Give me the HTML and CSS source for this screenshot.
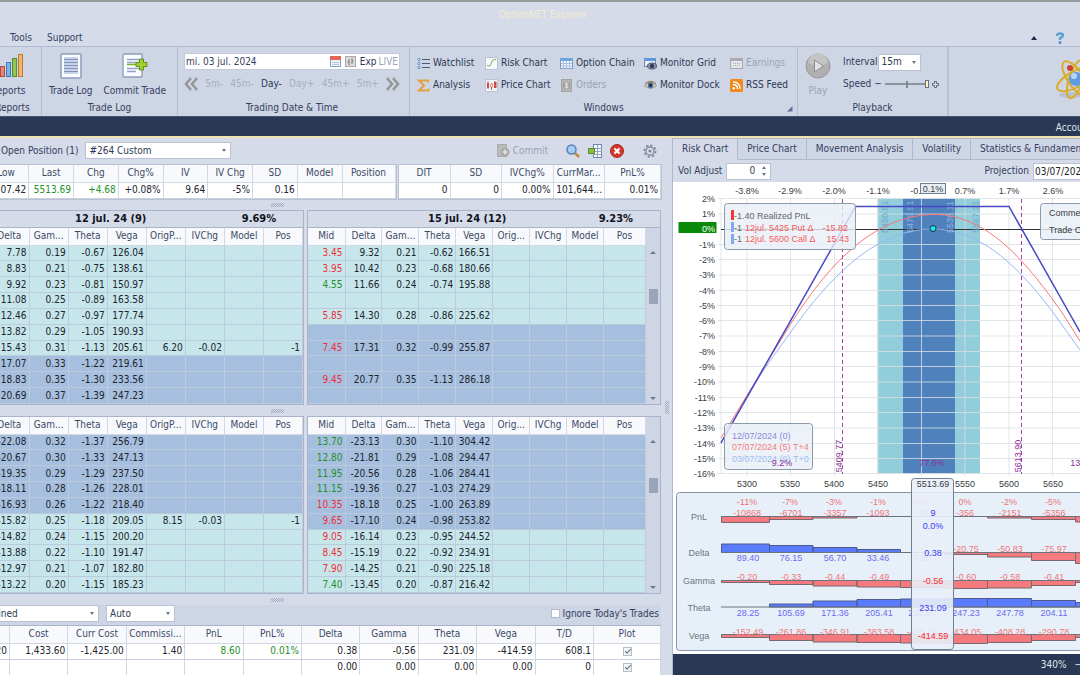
FILE: index.html
```html
<!DOCTYPE html>
<html lang="en">
<head>
<meta charset="utf-8">
<title>OptionNET Explorer</title>
<link rel="stylesheet" href="styles.css">
</head>
<body>
<header class="titlebar">
  <div class="app-title">OptionNET Explorer</div>
  <nav class="menu">
    <button class="menu-item">Tools</button>
    <button class="menu-item">Support</button>
    <span class="menu-spacer"></span>
    <button class="icon-btn" aria-label="Collapse ribbon"><svg width="6" height="4"><path d="M0 4 3 0l3 4z" fill="#1f2a4a"/></svg></button>
    <button class="icon-btn" aria-label="Help"><svg width="10" height="12" viewBox="0 0 10 12"><path d="M2 4q0-2.500 3-2.500t3 2q0 1.500-3 2.500v2" fill="none" stroke="#5d9fd0" stroke-width="2.400"/><circle cx="5" cy="10.500" r="1.500" fill="#4c8fc8"/></svg></button>
  </nav>
</header>

<section class="ribbon">
  <div class="group g-reports">
    <div class="group-body">
      <button class="big"><svg width="32" height="26" viewBox="0 0 32 26"><g stroke-width="1"><rect x="2.500" y="18.500" width="4" height="5" fill="#d9756f" stroke="#a44"/><rect x="8.500" y="13.500" width="4" height="10" fill="#e8837a" stroke="#b44a40"/><rect x="14.500" y="9.500" width="4" height="14" fill="#7db4e6" stroke="#3f7cb5"/><rect x="20.500" y="5.500" width="4" height="18" fill="#93c553" stroke="#5b8c2c"/><rect x="26.500" y="1.500" width="4" height="22" fill="#f2b36a" stroke="#c07b34"/></g></svg><span>Reports</span></button>
    </div>
    <div class="caption">Reports</div>
  </div>
  <div class="group g-log">
    <div class="group-body">
      <button class="big"><svg width="22" height="26" viewBox="0 0 22 26"><rect x="1" y="1" width="20" height="24" rx="1" fill="#fbfcff" stroke="#8d9cba" stroke-width="1.500"/><rect x="4" y="4" width="14" height="17" fill="#c8d3ea"/><path d="M4 6.500h14M4 9.500h14M4 12.500h14M4 15.500h14M4 18.500h14" stroke="#8193bb"/></svg><span>Trade Log</span></button>
      <button class="big"><svg width="26" height="26" viewBox="0 0 26 26"><rect x="1" y="1" width="19" height="23" rx="1" fill="#fbfcff" stroke="#8d9cba" stroke-width="1.300"/><path d="M5 6.500h12M5 9.500h12M5 15.500h12M5 18.500h9" stroke="#93a3c6" stroke-width="1.500"/><path d="M5 11.500h12" stroke="#7cb228" stroke-width="1.500"/><path d="M17.500 6h4v3.500H25v4h-3.500V17h-4v-3.500H14v-4h3.500z" fill="#9ed02f" stroke="#5f8f1e"/></svg><span>Commit Trade</span></button>
    </div>
    <div class="caption">Trade Log</div>
  </div>
  <div class="group g-date">
    <div class="group-body col">
      <div class="datebox">
        <input class="date-input" type="text" value="mi. 03 jul. 2024" aria-label="Trading date">
        <svg width="11" height="11" viewBox="0 0 11 11"><rect x=".5" y=".5" width="10" height="10" fill="#eef3fa" stroke="#8d9fbf"/><path d="M0 0h11v4H0z" fill="#e2665a"/><path d="M2 6.500h7M2 8.500h7" stroke="#b9c5d9"/></svg>
        <svg width="11" height="11" viewBox="0 0 11 11"><rect x=".5" y=".5" width="10" height="10" fill="#dcdcdc" stroke="#aaa"/><path d="M4 3v6M4 6H2.500M7 2v6M7 5h1.500" stroke="#777" fill="none"/></svg>
        <span class="exp">Exp</span><span class="live">LIVE</span>
      </div>
      <div class="steps">
        <button aria-label="Back"><svg width="14" height="14" viewBox="0 0 14 14"><path d="M7 1 2 7l5 6M13 1 8 7l5 6" fill="none" stroke="#969696" stroke-width="2.500"/></svg></button>
        <button class="off">5m-</button><button class="off">45m-</button><button>Day-</button><button class="off">Day+</button><button class="off">45m+</button><button class="off">5m+</button>
        <button aria-label="Forward"><svg width="14" height="14" viewBox="0 0 14 14"><path d="m1 1 5 6-5 6M7 1l5 6-5 6" fill="none" stroke="#969696" stroke-width="2.500"/></svg></button>
      </div>
    </div>
    <div class="caption">Trading Date &amp; Time</div>
  </div>
  <div class="group g-windows">
    <div class="group-body">
      <div class="wingrid">
        <button><svg width="13" height="13" viewBox="0 0 13 13"><path d="M5 2.500h8M5 6.500h8M5 10.500h8" stroke="#4d5a75" stroke-width="1.200"/><g fill="#cfe2f6" stroke="#4f86c0" stroke-width=".8"><circle cx="2" cy="2.500" r="1.200"/><circle cx="2" cy="6.500" r="1.200"/><circle cx="2" cy="10.500" r="1.200"/></g></svg>Watchlist</button>
        <button><svg width="13" height="13" viewBox="0 0 13 13"><rect x=".5" y=".5" width="12" height="12" fill="#f7f9f6" stroke="#b9c4d6"/><path d="M2 8.500q3 2 4-1.500t2-4 3-.5" fill="none" stroke="#8a9f78"/></svg>Risk Chart</button>
        <button><svg width="13" height="13" viewBox="0 0 13 13"><rect x=".5" y="1.500" width="12" height="10" fill="#f4f8fd" stroke="#7a9cc8"/><path d="M0 1h13v3H0z" fill="#6fa3dc"/><path d="M3.500 4v8M6.500 4v8M9.500 4v8M1 6.500h11M1 9h11" stroke="#a8c0df"/></svg>Option Chain</button>
        <button><svg width="13" height="13" viewBox="0 0 13 13"><rect x=".5" y="1.500" width="11" height="8" fill="#e9f0fa" stroke="#7089b3"/><path d="M0 1h12v3H0z" fill="#5f98da"/><ellipse cx="8" cy="9" rx="4.500" ry="3" fill="#8793ab" stroke="#4b5670"/><circle cx="8" cy="9" r="2" fill="#26324a"/></svg>Monitor Grid</button>
        <button class="off"><svg width="13" height="13" viewBox="0 0 13 13"><rect x=".5" y="1.500" width="12" height="10" fill="#e4e6ea" stroke="#a4a8b0"/><path d="M0 1h13v3H0z" fill="#aaa"/><path d="M3 6.500h8M3 8.500h8" stroke="#aaa" stroke-dasharray="1 1"/></svg>Earnings</button>
        <button><svg width="13" height="13" viewBox="0 0 13 13"><path d="M11 3.500V1.500H2L7 6.500 2 11.500h9.500v-2" fill="none" stroke="#e2a13d" stroke-width="2"/></svg>Analysis</button>
        <button><svg width="13" height="13" viewBox="0 0 13 13"><rect x=".5" y=".5" width="12" height="12" fill="#f4f4f6" stroke="#b9c4d6"/><path d="M3 2v8M6.500 4v7M10 2v7" stroke="#777"/><path d="M2 4h2v5H2zM9 3h2.500v6H9z" fill="#d84444"/><path d="M5.500 5h2v3h-2z" fill="#fff" stroke="#c55" stroke-width=".6"/></svg>Price Chart</button>
        <button class="off"><svg width="13" height="13" viewBox="0 0 13 13"><rect x="1.500" y=".5" width="10" height="12" fill="#b5b5b5" stroke="#a5a5a5"/><circle cx="6.500" cy="6.500" r="3.500" fill="#999"/><path d="M8.500 4.500h-3v2h2.500v2H4.500M6.500 3v7" fill="none" stroke="#ddd"/></svg>Orders</button>
        <button><svg width="13" height="13" viewBox="0 0 13 13"><path d="M.5 6.500q6-6.500 12 0-6 5.500-12 0z" fill="#f3ead9" stroke="#95806a"/><circle cx="6.500" cy="6.300" r="3" fill="#57789f"/><circle cx="6.500" cy="6.300" r="1.500" fill="#1c2a3f"/><path d="M1 4.500q5.500-4.500 11 0" fill="none" stroke="#a07c58"/></svg>Monitor Dock</button>
        <button><svg width="13" height="13" viewBox="0 0 13 13"><rect width="13" height="13" rx="1.500" fill="#f08a1c"/><circle cx="3.800" cy="9.300" r="1.200" fill="#fff"/><path d="M3 5.500q4.500 0 4.500 4.500M3 2.800q7 0 7 7.200" fill="none" stroke="#fff" stroke-width="1.300"/></svg>RSS Feed</button>
      </div>
    </div>
    <div class="caption">Windows</div>
    <svg class="launcher" width="6" height="6"><path d="M5.500 0v5.500H0z" fill="#5f6f92"/></svg>
  </div>
  <div class="group g-play">
    <div class="group-body">
      <button class="big off"><svg width="26" height="26" viewBox="0 0 26 26"><circle cx="13" cy="13" r="12" fill="#b0b0b0" stroke="#999"/><path d="M3 10a10 10 0 0 1 20 0q-10 5-20 0z" fill="#c4c4c4"/><path d="M9.500 7v12l9-6z" fill="#e2e2e2" stroke="#8c8c8c"/></svg><span>Play</span></button>
      <div class="playopts">
        <div class="optrow"><label for="interval">Interval</label><span class="combo c-int"><select id="interval"><option>15m</option></select></span></div>
        <div class="optrow"><label for="speed">Speed</label><span class="sgn">−</span><input id="speed" class="speed" type="range" value="100"><svg width="7" height="7"><path d="M2.500.5h2v2h2v2h-2v2h-2v-2h-2v-2h2z" fill="#d8deec" stroke="#5f6b7c"/></svg></div>
      </div>
    </div>
    <div class="caption">Playback</div>
  </div>
  <div class="logo"><svg width="46" height="46" viewBox="0 0 46 46"><ellipse cx="16" cy="38" rx="12" ry="3" fill="#b9c0cf"/><g fill="none" stroke="#d9ad2b" stroke-width="2"><ellipse cx="21" cy="22" rx="21" ry="8" transform="rotate(-28 21 22)"/><ellipse cx="21" cy="22" rx="21" ry="8" transform="rotate(55 21 22)"/><ellipse cx="21" cy="22" rx="20" ry="7" transform="rotate(108 21 22)"/></g><circle cx="21" cy="22" r="7" fill="#5f9be0"/><circle cx="19" cy="19" r="3" fill="#b8d6f6"/><circle cx="15" cy="11" r="3" fill="#c9442c"/></svg></div>
</section>

<div class="accountbar">Account</div>

<main class="workspace">
  <section class="left">
    <div class="posbar">
      <label for="position">Open Position (1)</label>
      <span class="combo c-pos"><select id="position"><option>#264 Custom</option></select></span>
      <span class="menu-spacer"></span>
      <button class="tool off"><svg width="13" height="13" viewBox="0 0 13 13"><rect x=".5" y=".5" width="9" height="12" fill="#bbb" stroke="#aaa"/><circle cx="8" cy="8" r="4.500" fill="#aaa"/><path d="M8 5.500v5M5.500 8h5" stroke="#e6e6e6" stroke-width="1.500"/></svg>Commit</button>
      <button class="tool t1" aria-label="Search"><svg width="14" height="14" viewBox="0 0 14 14"><path d="m9 9 4 4" stroke="#c28a3c" stroke-width="2.500"/><circle cx="5.500" cy="5.500" r="4.500" fill="#a6cdf5" stroke="#5d82b8" stroke-width="1.500"/></svg></button>
      <button class="tool t2" aria-label="Columns"><svg width="14" height="14" viewBox="0 0 14 14"><rect x="5.500" y=".5" width="8" height="13" fill="#f6f9fd" stroke="#7186ad"/><path d="M5 4.500h9M5 7.500h9M5 10.500h9M9.500 1v12" stroke="#92a4c4"/><path d="M.5 4.500h6v5h-6z" fill="#8bbf3a" stroke="#5c8726"/></svg></button>
      <button class="tool t2" aria-label="Close position"><svg width="14" height="14" viewBox="0 0 14 14"><circle cx="7" cy="7" r="6.500" fill="#d6362c" stroke="#a82820"/><path d="m4.500 4.500 5 5M9.500 4.500l-5 5" stroke="#fff" stroke-width="2.200"/></svg></button>
      <button class="tool t3" aria-label="Settings"><svg width="14" height="14" viewBox="0 0 14 14"><circle cx="7" cy="7" r="5.700" fill="none" stroke="#7d8799" stroke-width="1.600" stroke-dasharray="2.400 2"/><circle cx="7" cy="7" r="4" fill="#dde2ec" stroke="#7d8799" stroke-width="1.300"/><circle cx="7" cy="7" r="1.600" fill="#7d8799"/></svg></button>
    </div>

    <div class="quotes">
      <table class="grid q1">
        <thead><tr><th>Low<th>Last<th>Chg<th>Chg%<th>IV<th>IV Chg<th>SD<th>Model<th class="wide">Position</thead>
        <tbody><tr><td>5507.42<td class="g">5513.69<td class="g">+4.68<td>+0.08%<td>9.64<td>-5%<td>0.16<td><td></tbody>
      </table>
      <table class="grid q2">
        <thead><tr><th>DIT<th>SD<th>IVChg%<th>CurrMar...<th class="last">PnL%</thead>
        <tbody><tr><td>0<td>0<td>0.00%<td>101,644...<td>0.01%</tbody>
      </table>
    </div>
    <div class="split"></div>

    <div class="chains calls">
      <div class="chain near">
        <div class="chain-title"><span>12 jul. 24 (9)</span><span class="iv">9.69%</span></div>
        <table class="grid rows">
          <thead><tr><th>Delta<th>Gam...<th>Theta<th>Vega<th>OrigP...<th>IVChg<th>Model<th>Pos</thead>
          <tbody>
          <tr><td>7.78<td>0.19<td>-0.67<td>126.04<td><td><td><td>
          <tr><td>8.83<td>0.21<td>-0.75<td>138.61<td><td><td><td>
          <tr><td>9.92<td>0.23<td>-0.81<td>150.97<td><td><td><td>
          <tr><td>11.08<td>0.25<td>-0.89<td>163.58<td><td><td><td>
          <tr><td>12.46<td>0.27<td>-0.97<td>177.74<td><td><td><td>
          <tr><td>13.82<td>0.29<td>-1.05<td>190.93<td><td><td><td>
          <tr><td>15.43<td>0.31<td>-1.13<td>205.61<td>6.20<td>-0.02<td><td>-1
          <tr class="d"><td>17.07<td>0.33<td>-1.22<td>219.61<td><td><td><td>
          <tr class="d"><td>18.83<td>0.35<td>-1.30<td>233.56<td><td><td><td>
          <tr class="d"><td>20.69<td>0.37<td>-1.39<td>247.23<td><td><td><td>
          </tbody>
        </table>
      </div>
      <div class="chain far">
        <div class="chain-title"><span>15 jul. 24 (12)</span><span class="iv">9.23%</span></div>
        <div class="scrolled">
        <table class="grid rows">
          <thead><tr><th>Mid<th>Delta<th>Gam...<th>Theta<th>Vega<th>Orig...<th>IVChg<th>Model<th class="pos">Pos</thead>
          <tbody>
          <tr><td class="r">3.45<td>9.32<td>0.21<td>-0.62<td>166.51<td><td><td><td>
          <tr><td class="r">3.95<td>10.42<td>0.23<td>-0.68<td>180.66<td><td><td><td>
          <tr><td class="g">4.55<td>11.66<td>0.24<td>-0.74<td>195.88<td><td><td><td>
          <tr><td><td><td><td><td><td><td><td><td>
          <tr><td class="r">5.85<td>14.30<td>0.28<td>-0.86<td>225.62<td><td><td><td>
          <tr class="d"><td><td><td><td><td><td><td><td><td>
          <tr class="d"><td class="r">7.45<td>17.31<td>0.32<td>-0.99<td>255.87<td><td><td><td>
          <tr class="d"><td><td><td><td><td><td><td><td><td>
          <tr class="d"><td class="r">9.45<td>20.77<td>0.35<td>-1.13<td>286.18<td><td><td><td>
          <tr class="d"><td><td><td><td><td><td><td><td><td>
          </tbody>
        </table>
        <div class="sbar"><i class="up"></i><b></b><i class="down"></i></div>
        </div>
      </div>
    </div>
    <div class="split"></div>

    <div class="chains puts">
      <div class="chain near">
        <table class="grid rows">
          <thead><tr><th>Delta<th>Gam...<th>Theta<th>Vega<th>OrigP...<th>IVChg<th>Model<th>Pos</thead>
          <tbody>
          <tr class="d"><td>-22.08<td>0.32<td>-1.37<td>256.79<td><td><td><td>
          <tr class="d"><td>-20.67<td>0.30<td>-1.33<td>247.13<td><td><td><td>
          <tr class="d"><td>-19.35<td>0.29<td>-1.29<td>237.50<td><td><td><td>
          <tr class="d"><td>-18.11<td>0.28<td>-1.26<td>228.01<td><td><td><td>
          <tr class="d"><td>-16.93<td>0.26<td>-1.22<td>218.40<td><td><td><td>
          <tr><td>-15.82<td>0.25<td>-1.18<td>209.05<td>8.15<td>-0.03<td><td>-1
          <tr><td>-14.82<td>0.24<td>-1.15<td>200.20<td><td><td><td>
          <tr><td>-13.88<td>0.22<td>-1.10<td>191.47<td><td><td><td>
          <tr><td>-12.97<td>0.21<td>-1.07<td>182.80<td><td><td><td>
          <tr><td>-13.22<td>0.20<td>-1.15<td>185.23<td><td><td><td>
          </tbody>
        </table>
      </div>
      <div class="chain far">
        <div class="scrolled">
        <table class="grid rows">
          <thead><tr><th>Mid<th>Delta<th>Gam...<th>Theta<th>Vega<th>Orig...<th>IVChg<th>Model<th class="pos">Pos</thead>
          <tbody>
          <tr class="d"><td class="g">13.70<td>-23.13<td>0.30<td>-1.10<td>304.42<td><td><td><td>
          <tr class="d"><td class="g">12.80<td>-21.81<td>0.29<td>-1.08<td>294.47<td><td><td><td>
          <tr class="d"><td class="g">11.95<td>-20.56<td>0.28<td>-1.06<td>284.41<td><td><td><td>
          <tr class="d"><td class="g">11.15<td>-19.36<td>0.27<td>-1.03<td>274.29<td><td><td><td>
          <tr class="d"><td class="r">10.35<td>-18.18<td>0.25<td>-1.00<td>263.89<td><td><td><td>
          <tr class="d"><td class="r">9.65<td>-17.10<td>0.24<td>-0.98<td>253.82<td><td><td><td>
          <tr><td class="r">9.05<td>-16.14<td>0.23<td>-0.95<td>244.52<td><td><td><td>
          <tr><td class="r">8.45<td>-15.19<td>0.22<td>-0.92<td>234.91<td><td><td><td>
          <tr><td class="r">7.90<td>-14.25<td>0.21<td>-0.90<td>225.18<td><td><td><td>
          <tr><td class="g">7.40<td>-13.45<td>0.20<td>-0.87<td>216.42<td><td><td><td>
          </tbody>
        </table>
        <div class="sbar"><i class="up"></i><b></b><i class="down"></i></div>
        </div>
      </div>
    </div>
    <div class="split"></div>

    <div class="sumbar">
      <span class="combo c-comb"><select aria-label="View"><option>Combined</option></select></span>
      <span class="combo c-auto"><select aria-label="Mode"><option>Auto</option></select></span>
      <span class="menu-spacer"></span>
      <label class="ignore"><input type="checkbox" class="chk">Ignore Today's Trades</label>
    </div>
    <div class="sumwrap">
      <table class="grid sum">
        <thead><tr><th><th>Cost<th>Curr Cost<th>Commissi...<th>PnL<th>PnL%<th>Delta<th>Gamma<th>Theta<th>Vega<th>T/D<th class="plot">Plot</thead>
        <tbody>
        <tr><td>20<td>1,433.60<td>-1,425.00<td>1.40<td class="g">8.60<td class="g">0.01%<td>0.38<td>-0.56<td>231.09<td>-414.59<td>608.1<td class="c"><input type="checkbox" class="chk small" checked aria-label="Plot combined">
        <tr><td><td><td><td><td><td><td>0.00<td>0.00<td>0.00<td>0.00<td>0<td class="c"><input type="checkbox" class="chk small" checked aria-label="Plot second row">
        </tbody>
      </table>
    </div>
    <div class="vgrip"></div>
  </section>

  <section class="right">
    <nav class="tabs">
      <button class="tab on">Risk Chart</button><button class="tab">Price Chart</button><button class="tab">Movement Analysis</button><button class="tab">Volatility</button><button class="tab">Statistics &amp; Fundamentals</button>
    </nav>
    <div class="chartbar">
      <label for="vol">Vol Adjust</label>
      <span class="spin"><input id="vol" type="text" value="0"><span class="arrows"><i class="up"></i><i class="down"></i></span></span>
      <span class="menu-spacer"></span>
      <label for="proj">Projection</label>
      <input id="proj" class="proj" type="text" value="03/07/2024">
    </div>
    <div class="chart">
      <svg viewBox="673 182 407 472" preserveAspectRatio="xMinYMin meet" role="img" aria-label="Risk chart">
        <rect x="877.500" y="198.500" width="102.500" height="275" fill="#92cddc"/>
        <rect x="903" y="198.500" width="52" height="275" fill="#4f81bd"/>
        <path d="M718 198.500h362M718 214h362M718 244.500h362M718 259.500h362M718 275h362M718 290.500h362M718 305.500h362M718 320.500h362M718 336h362M718 351.500h362M718 366.500h362M718 382h362M718 397.500h362M718 412.500h362M718 428h362M718 443.500h362M718 458.500h362M718 473.500h362M721 198v276M747 198v278M790.500 198v278M834.500 198v278M878 198v278M921.500 198v278M965 198v278M1009 198v278M1052.500 198v278" stroke="#dcdfe2" stroke-opacity=".8" fill="none"/>
        <path d="M842.500 199v275M1021.500 199v275" stroke="#a640a6" stroke-dasharray="4 3"/>
        <path d="M721 229.500h359" stroke="#333"/>
        <g class="band" fill="#6fa8c6">
          <text transform="translate(888 233) rotate(-90)">5450.81</text>
          <text transform="translate(913 233) rotate(-90)" fill="#8fb4da">5479.91</text>
          <text transform="translate(953 233) rotate(-90)" fill="#8fb4da">5538.11</text>
          <text transform="translate(979 233) rotate(-90)">5567.21</text>
        </g>
        <g fill="none">
          <path d="M721 442 747 396C760 374 784 341 807 310 845 262 885 229 933 229 975 229 1012 258 1052 311L1080 350" stroke="#98b8f4"/>
          <path d="M721 438 790 325C826 268 872 214.500 935 214.500 990 214.500 1030 268 1061 311L1080 341" stroke="#f67878"/>
          <path d="M721 443 855.500 206.500H1009L1080 332" stroke="#4848c4" stroke-width="1.500"/>
        </g>
        <circle cx="933" cy="228.500" r="3" fill="#1fe5ee" stroke="#133"/>
        <rect x="678.500" y="222" width="38" height="11" fill="#0a8a0a"/>
        <g text-anchor="end">
          <text x="715" y="202">2%</text><text x="715" y="217">1%</text><text x="715" y="232" fill="#fff">0%</text><text x="715" y="248">-1%</text><text x="715" y="263">-2%</text><text x="715" y="278">-3%</text><text x="715" y="294">-4%</text><text x="715" y="309">-5%</text><text x="715" y="324">-6%</text><text x="715" y="339">-7%</text><text x="715" y="355">-8%</text><text x="715" y="370">-9%</text><text x="715" y="385">-10%</text><text x="715" y="401">-11%</text><text x="715" y="416">-12%</text><text x="715" y="431">-13%</text><text x="715" y="447">-14%</text><text x="715" y="462">-15%</text><text x="715" y="477">-16%</text>
        </g>
        <g text-anchor="middle">
          <text x="747" y="194">-3.8%</text><text x="790" y="194">-2.9%</text><text x="834" y="194">-2.0%</text><text x="878" y="194">-1.1%</text><text x="922" y="194">-0.2%</text><text x="965" y="194">0.7%</text><text x="1009" y="194">1.7%</text><text x="1053" y="194">2.6%</text>
          <text x="747" y="487">5300</text><text x="790" y="487">5350</text><text x="834" y="487">5400</text><text x="878" y="487">5450</text><text x="965" y="487">5550</text><text x="1009" y="487">5600</text><text x="1053" y="487">5650</text>
        </g>
        <rect x="920.500" y="183.500" width="25" height="10" fill="#e6edf5" stroke="#6d7c8e"/>
        <text x="933" y="192" text-anchor="middle">0.1%</text>
        <g class="prob" text-anchor="middle">
          <text transform="translate(842 456) rotate(-90)">5409.77</text>
          <text transform="translate(1021 456) rotate(-90)">5613.90</text>
        </g>

        <rect class="box" x="724.500" y="203.500" width="131" height="46" rx="3"/>
        <path d="M731 210h3v10h-3z" fill="#f33"/><path d="M731 222h3v10h-3zM731 234h3v10h-3z" fill="#7fa9f0"/>
        <g>
          <text x="734" y="219" fill="#666">-1.40 Realized PnL</text>
          <text x="734" y="231" fill="#666">-1</text><text x="745" y="231" fill="#f75a5a">12jul. 5425 Put Δ</text><text x="848" y="231" text-anchor="end" fill="#f75a5a">-15.82</text>
          <text x="734" y="242" fill="#666">-1</text><text x="745" y="242" fill="#f75a5a">12jul. 5600 Call Δ</text><text x="849" y="242" text-anchor="end" fill="#f75a5a">15.43</text>
        </g>
        <rect class="box" x="1040.500" y="203.500" width="60" height="36" rx="3"/>
        <text x="1049" y="216">Comments</text><text x="1049" y="233">Trade Open</text>
        <rect class="box" x="724.500" y="423.500" width="88" height="46" rx="3"/>
        <text x="732" y="439" fill="#8a86dc">12/07/2024 (0)</text><text x="732" y="450" fill="#f67c7c">07/07/2024 (5) T+4</text><text x="732" y="462" fill="#9cbcf2">03/07/2024 (9) T+0</text>
        <g class="prob" text-anchor="middle"><text x="782" y="466">9.2%</text><text x="932" y="466">77.6%</text><text x="1083" y="466">13.2%</text></g>

        <rect x="676.500" y="492.500" width="430" height="158" rx="3" fill="#e7f0f8" stroke="#8796a8"/>
        <g text-anchor="middle" fill="#6c757f"><text x="699" y="520">PnL</text><text x="699" y="556">Delta</text><text x="699" y="584">Gamma</text><text x="699" y="611">Theta</text><text x="699" y="639">Vega</text></g>
        <g stroke="#77696f" fill="#f47a7d">
          <path d="M721.500 516.500v6h48v-6zM769.500 516.500v3h43.500v-3zM813 516.500v1.500h44v-1.500zM987.500 516.500v1.500h44v-1.500zM1031.500 516.500v3h44v-3zM1075.500 516.500v5.500h20v-5.500z"/>
          <path d="M944.500 552.500v2h43v-2zM987.500 552.500v4.500h44v-4.500zM1031.500 552.500v8h44v-8zM1075.500 552.500v11h20v-11z"/>
          <path d="M721.500 580.500v2h48v-2zM769.500 580.500v4h43.500v-4zM813 580.500v5.500h44v-5.500zM857 580.500v6.500h43.500v-6.500zM900.500 580.500v7h44v-7zM944.500 580.500v8h43v-8zM987.500 580.500v7.500h44v-7.500zM1031.500 580.500v5h44v-5zM1075.500 580.500v2h20v-2z"/>
          <path d="M721.500 634.500v3h48v-3zM769.500 634.500v6h43.500v-6zM813 634.500v7.500h44v-7.500zM857 634.500v8h43.500v-8zM900.500 634.500v8.500h44v-8.500zM944.500 634.500v9h43v-9zM987.500 634.500v8h44v-8zM1031.500 634.500v6h44v-6zM1075.500 634.500v3h20v-3z"/>
        </g>
        <g stroke="#4d5a8c" fill="#5b7bff">
          <path d="M721.500 552.500v-8.500h48v8.500zM769.500 552.500v-7h43.500v7zM813 552.500v-5h44v5zM857 552.500v-3h43.500v3z"/>
          <path d="M769.500 607v-3h43.500v3zM813 607v-6h44v6zM857 607v-7.500h43.500v7.500zM900.500 607v-8h44v8zM944.500 607v-8.500h43v8.500zM987.500 607v-8.500h44v8.500zM1031.500 607v-6.500h44v6.500zM1075.500 607v-4.500h20v4.500z"/>
        </g>
        <path d="M721 516.500h359M721 552.500h359M721 580.500h359M721 607h359M721 634.500h359" stroke="#6c747d"/>
        <g text-anchor="middle" fill="#f0757b">
          <text x="747" y="505">-11%</text><text x="790" y="505">-7%</text><text x="834" y="505">-3%</text><text x="878" y="505">-1%</text><text x="921" y="505">0%</text><text x="965" y="505">0%</text><text x="1009" y="505">-2%</text><text x="1053" y="505">-5%</text>
          <text x="747" y="516">-10868</text><text x="791" y="516">-6701</text><text x="835" y="516">-3357</text><text x="878" y="516">-1093</text><text x="922" y="516">-48</text><text x="965" y="516">-356</text><text x="1010" y="516">-2151</text><text x="1054" y="516">-5356</text>
          <text x="966" y="552">-20.75</text><text x="1010" y="552">-50.83</text><text x="1054" y="552">-75.97</text>
          <text x="747" y="580">-0.20</text><text x="791" y="580">-0.33</text><text x="835" y="580">-0.44</text><text x="879" y="580">-0.49</text><text x="922" y="580">-0.54</text><text x="966" y="580">-0.60</text><text x="1010" y="580">-0.58</text><text x="1054" y="580">-0.41</text>
          <text x="748" y="635">-152.49</text><text x="791" y="635">-261.86</text><text x="835" y="635">-346.91</text><text x="879" y="635">-383.58</text><text x="922" y="635">-406.20</text><text x="966" y="635">-434.05</text><text x="1010" y="635">-408.28</text><text x="1054" y="635">-290.78</text>
        </g>
        <g text-anchor="middle" fill="#6a6af5">
          <text x="748" y="561">89.40</text><text x="791" y="561">76.15</text><text x="835" y="561">56.70</text><text x="878" y="561">33.46</text><text x="922" y="561">7.90</text>
          <text x="748" y="616">28.25</text><text x="791" y="616">105.69</text><text x="835" y="616">171.36</text><text x="879" y="616">205.41</text><text x="922" y="616">224.57</text><text x="966" y="616">247.23</text><text x="1010" y="616">247.78</text><text x="1054" y="616">204.11</text>
        </g>
        <rect x="911.500" y="478.500" width="42" height="171" rx="3" fill="#e9eef8" fill-opacity=".9" stroke="#6f7f92"/>
        <g text-anchor="middle"><text x="933" y="487">5513.69</text>
          <g class="cur" fill="#3a3af0"><text x="933" y="516">9</text><text x="933" y="529">0.0%</text><text x="933" y="556">0.38</text><text x="933" y="611">231.09</text></g>
          <g class="cur" fill="#f52c2c"><text x="933" y="584">-0.56</text><text x="933" y="639">-414.59</text></g></g>
      </svg>
    </div>
    <footer class="status"><span>340%</span><span>−</span></footer>
  </section>
</main>
</body>
</html>
```
FILE: styles.css
```css
* { box-sizing: border-box; }
body { margin: 0; height: 100vh; overflow: hidden; display: flex; flex-direction: column; background: #d5dbe9; color: #34405e; font: 10px/12px "DejaVu Sans Condensed", "Noto Sans", sans-serif; }
button, input, select { font: inherit; color: inherit; margin: 0; padding: 0; border: 0; background: none; border-radius: 0; }
button { white-space: nowrap; cursor: pointer; }
svg { display: block; flex: none; }
.off { color: #9aa3b5; }
.menu-spacer { flex: 1; }

.titlebar { flex: none; height: 47px; border-top: 2px solid #9a9da0; border-bottom: 1px solid #b2bbd0; padding-top: 7px; }
.app-title { text-align: center; padding-left: 6px; color: #f3ebcd; }
.menu { display: flex; align-items: center; height: 16px; margin-top: 9px; padding: 0 15px 0 10px; gap: 15px; }
.icon-btn { padding-left: 3px; }

.ribbon { flex: none; display: flex; height: 69px; background: #ced5e5; }
.group { position: relative; display: flex; flex-direction: column; flex: none; border-right: 1px solid #b4bccf; padding-top: 6px; }
.group-body { display: flex; height: 48px; }
.group-body.col { flex-direction: column; }
.caption { text-align: center; line-height: 14px; }
.g-reports { width: 58px; margin-left: -16px; }
.g-reports .group-body { padding-left: 7px; }
.g-log { width: 136px; }
.g-log .group-body { padding-left: 7px; gap: 11px; }
.g-date { width: 232px; padding-left: 6px; padding-right: 9px; }
.g-windows { width: 388px; }
.g-play { width: 151px; border-right: 2px solid #bac2d3; }
.big { display: flex; flex-direction: column; align-items: center; gap: 6px; }
.big svg { height: 26px; }
.datebox { display: flex; align-items: center; gap: 4px; height: 17px; background: #fff; border: 1px solid #c3cad9; padding: 0 1px; }
.date-input { flex: 1; min-width: 0; }
.exp { color: #2c3852; }
.live { color: #9aa3b5; margin-left: -2px; }
.steps { display: flex; justify-content: space-between; align-items: center; margin-top: 7px; color: #2c3852; }
.steps .off { color: #a7afc0; }
.wingrid { display: grid; grid-template-columns: 68px 75px 84px 86px 62px; grid-auto-rows: 22px; padding-left: 7px; margin-top: -1px; color: #2c3852; }
.wingrid .off { color: #9aa3b5; }
.wingrid button { display: flex; align-items: center; gap: 3px; }
.launcher { position: absolute; right: 4px; bottom: 4px; }
.g-play .big { margin-left: 7px; width: 26px; }
.playopts { padding-left: 12px; }
.optrow { display: flex; align-items: center; height: 18px; gap: 3px; }
.optrow + .optrow { margin-top: 4px; }
.combo { position: relative; display: block; height: 17px; background: #fff; border: 1px solid #b9c1d2; }
.combo select { appearance: none; width: 100%; height: 100%; padding: 0 12px 0 2px; color: #2c3852; }
.combo::after { content: ""; position: absolute; right: 4px; top: 6px; border: 2px solid transparent; border-top: 3px solid #67748f; border-bottom: 0; pointer-events: none; }
.c-int { width: 43px; margin-left: -2px; }
.sgn { line-height: 10px; }
.speed { appearance: none; width: 44px; height: 9px; background: linear-gradient(#7e8794, #7e8794) center / 2px 7px no-repeat, linear-gradient(#8d939c, #8d939c) center / 100% 2px no-repeat; }
.speed::-webkit-slider-thumb { appearance: none; width: 4px; height: 8px; background: #fff6c8; border: 1px solid #6b7380; }
.logo { flex: 1; overflow: hidden; padding: 10px 0 0; }
.logo svg { margin-left: auto; margin-right: -21px; }

.accountbar { flex: none; height: 20px; line-height: 21px; background: #293955; border-top: 1px solid #45536e; color: #dfe4ee; text-align: right; width: calc(100% + 12px); }
.workspace { flex: 1; min-height: 0; display: grid; grid-template-columns: minmax(0, 673fr) minmax(0, 407fr); grid-template-rows: minmax(0, 1fr); border-top: 2px solid #efe2b0; }
.left { min-width: 0; position: relative; overflow: hidden; padding-right: 11px; display: flex; flex-direction: column; border-right: 1px solid #aeb8cc; }
.left > * { flex: none; }
.right { min-width: 0; display: flex; flex-direction: column; overflow: hidden; }

.posbar { display: flex; align-items: center; height: 27px; padding: 0 4px 2px 1px; }
.c-pos { width: 146px; margin-left: 7px; }
.c-pos select, .c-auto select { padding-left: 3px; }
.tool { display: flex; align-items: center; gap: 3px; }
.t1 { margin-left: 18px; }
.t2 { margin-left: 8px; }
.t3 { margin-left: 19px; }

.grid { border-collapse: collapse; table-layout: fixed; background: #fff; color: #20242c; }
.grid th { height: 17px; padding: 0; font-weight: normal; color: #3c4965; background: #f7f9fd; border-right: 1px solid #d3d8e4; border-bottom: 1px solid #d3d8e4; white-space: nowrap; }
.grid td { height: 15px; padding: 0 2px 0 0; text-align: right; border-right: 1px solid #d3d5e2; border-bottom: 1px solid #c9d0e0; white-space: nowrap; line-height: 12px; }
.grid td.g { color: #23912b; }
.grid td.r { color: #ee3038; }
.quotes { display: flex; gap: 3px; height: 34px; margin-left: -16px; }
.q1, .q2 { height: 34px; outline: 1px solid #b9c1d2; }
.q1 { flex: 411 1 0; width: 411px; }
.q2 { flex: 262 1 0; width: 262px; }
.q1 .wide { width: 53px; }
.q2 .last { width: 56px; }
.split { height: 11px; display: flex; justify-content: center; align-items: center; width: 554px; }
.split::after { content: ""; width: 13px; height: 4px; background: repeating-conic-gradient(#a4adc2 0 25%, transparent 0 50%) 0 0 / 2px 2px; }

.chains { display: flex; gap: 3px; margin-left: -10px; }
.chain { border: 1px solid #a9b3c9; min-width: 0; }
.near { flex: 315 1 0; border-left: 0; }
.far { flex: 354 1 0; }
.chain-title { display: flex; height: 17px; align-items: center; justify-content: space-between; border-bottom: 1px solid #a9b3c9; font-weight: bold; font-size: 11px; color: #10141c; }
.near .chain-title { padding-left: 85px; padding-right: 27px; }
.far .chain-title { padding-left: 120px; padding-right: 27px; }
.rows { width: 100%; height: 176px; }
.rows tr { background: #c6e6eb; }
.rows tr.d { background: #a6bfde; }
.rows td { border-color: #bccbdc; border-right-color: #c0cadb; }
.rows .pos { width: 42px; }
.scrolled { display: flex; }
.scrolled .rows { flex: 1; }
.sbar { flex: none; width: 14px; display: flex; flex-direction: column; align-items: center; padding: 23px 0 4px; background: #ced5e5; }
.sbar b { width: 9px; height: 15px; margin-top: 35px; margin-bottom: auto; background: #9aa5ba; }
.up, .down { display: block; border: 3px solid transparent; }
.up { border-top: 0; border-bottom: 3px solid #6a7895; }
.down { border-bottom: 0; border-top: 3px solid #6a7895; }

.sumbar { display: flex; align-items: flex-start; height: 20px; padding-right: 2px; background: #ced5e5; }
.c-comb { width: 130px; margin-left: -31px; }
.c-auto { width: 69px; margin-left: 7px; }
.ignore { display: flex; align-items: center; gap: 3px; height: 17px; }
.chk { appearance: none; width: 9px; height: 9px; background: #fff; border: 1px solid #b3bccd; }
.chk.small { display: block; margin: 0 auto; background: #f4f6fa; }
.chk:checked::before { content: ""; display: block; width: 5px; height: 2px; margin: 1px; border-left: 1px solid #5d6980; border-bottom: 1px solid #5d6980; transform: rotate(-45deg); }
.sumwrap { margin-left: -49px; border-top: 1px solid #a9b3c9; }
.sum { width: 100%; }
.sum td { height: 16px; }
.sum .plot { width: 67px; }
.sum td.c { text-align: center; padding: 0; }
.vgrip { position: absolute; right: 3px; top: 263px; width: 4px; height: 13px; background: repeating-conic-gradient(#a4adc2 0 25%, transparent 0 50%) 0 0 / 2px 2px; }

.tabs { display: flex; flex: none; height: 22px; }
.tab { flex: none; padding: 0 9px; background: #ced5e5; border: 1px solid #b0b9cc; border-left: 0; }
.tab.on { background: #d5dbe9; border-bottom-color: #d5dbe9; }
.chartbar { display: flex; flex: none; align-items: center; height: 22px; padding-left: 5px; }
.spin { display: flex; align-items: center; width: 45px; height: 17px; margin-left: 4px; background: #fff; border: 1px solid #b9c1d2; }
.spin input { flex: 1; min-width: 0; text-align: right; }
.arrows { display: flex; flex-direction: column; gap: 4px; padding: 0 4px 0 7px; }
.arrows .up, .arrows .down { border-left-width: 2px; border-right-width: 2px; }
.proj { width: 62px; height: 17px; margin-left: 4px; margin-right: -15px; padding-left: 1px; background: #fff; border: 1px solid #b9c1d2; color: #20242c; }
.chart { flex: 1; min-height: 0; background: #fff; overflow: hidden; }
.chart svg { width: 100%; height: 100%; fill: #3a3d42; }
.chart text { font: 9px "Liberation Sans", Arial, sans-serif; }
.prob { fill: #8c2f9a; }
.box { fill: #e9eff8; fill-opacity: .8; stroke: #8c99a8; }
.status { flex: none; height: 21px; display: flex; align-items: center; justify-content: flex-end; gap: 8px; background: #293955; color: #dfe4ee; margin-right: -2px; }
```
